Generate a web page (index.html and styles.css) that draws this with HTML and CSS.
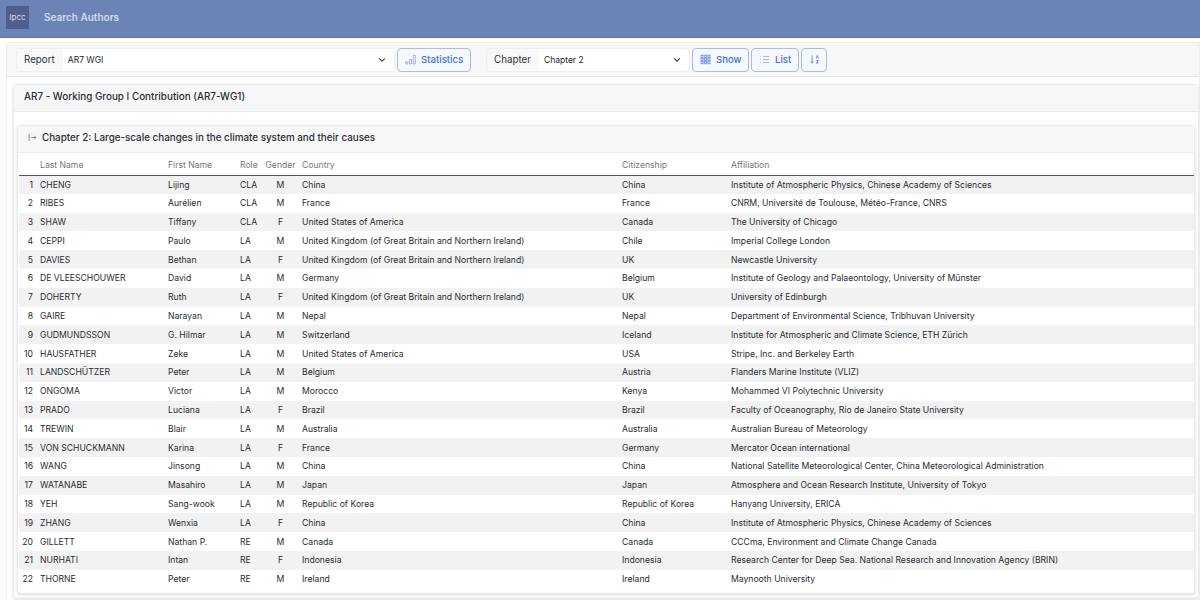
FILE: index.html
```html
<!DOCTYPE html>
<html lang="en">
<head>
<meta charset="utf-8">
<title>Search Authors</title>
<link rel="stylesheet" href="styles.css">
</head>
<body>
<nav class="navbar">
  <div class="logo">Ipcc</div>
  <div class="brand">Search Authors</div>
</nav>
<main class="outer">
  <div class="toolbar">
    <div class="group group-report">
      <span class="addon">Report</span>
      <div class="select"><span>AR7 WGI</span><svg class="chev" viewBox="0 0 16 16"><path d="M3.500 5.500 8 10l4.500-4.500"/></svg></div>
    </div>
    <button class="btn btn-stats"><svg class="ico" viewBox="0 0 16 16"><path d="M1 11.500h3v3H1zM6.500 8h3v6.500h-3zM12 2h3v12.500h-3z"/></svg>Statistics</button>
    <div class="group group-chapter">
      <span class="addon">Chapter</span>
      <div class="select"><span>Chapter 2</span><svg class="chev" viewBox="0 0 16 16"><path d="M3.500 5.500 8 10l4.500-4.500"/></svg></div>
    </div>
    <div class="btns">
      <button class="btn btn-show"><svg class="ico ico-grid" viewBox="0 0 16 16"><path d="M1.500 2h3v3h-3zM6.500 2h3v3h-3zM11.500 2h3v3h-3zM1.500 6.500h3v3h-3zM6.500 6.500h3v3h-3zM11.500 6.500h3v3h-3zM1.500 11h3v3h-3zM6.500 11h3v3h-3zM11.500 11h3v3h-3z"/></svg>Show</button>
      <button class="btn btn-list"><svg class="ico" viewBox="0 0 16 16"><path d="M5.500 3.500H15M5.500 8H15M5.500 12.500H15M1.500 3.500h1M1.500 8h1M1.500 12.500h1"/></svg>List</button>
      <button class="btn btn-sort"><svg class="ico ico-sort" viewBox="0 0 16 16"><path d="M4.500 2v11M2.500 11l2 2.500 2-2.500M10.500 6.500l1.500-4.500 1.500 4.500M10.700 9.500h2.800l-2.800 4h2.800"/></svg></button>
    </div>
  </div>
  <section class="card report">
    <header class="report-head">AR7 - Working Group I Contribution (AR7-WG1)</header>
    <div class="report-body">
      <section class="card chapter">
        <header class="chapter-head"><svg class="arrow" viewBox="0 0 16 16"><path d="M2 2v12M6 8h8M11 5l3 3-3 3"/></svg>Chapter 2: Large-scale changes in the climate system and their causes</header>
        <table>
          <colgroup><col class="c-n"><col class="c-last"><col class="c-first"><col class="c-role"><col class="c-gen"><col class="c-country"><col class="c-cit"><col></colgroup>
          <thead><tr><th></th><th>Last Name</th><th>First Name</th><th>Role</th><th>Gender</th><th>Country</th><th>Citizenship</th><th>Affiliation</th></tr></thead>
          <tbody>
<tr><td>1</td><td>CHENG</td><td>Lijing</td><td>CLA</td><td>M</td><td>China</td><td>China</td><td>Institute of Atmospheric Physics, Chinese Academy of Sciences</td></tr>
<tr><td>2</td><td>RIBES</td><td>Aurélien</td><td>CLA</td><td>M</td><td>France</td><td>France</td><td>CNRM, Université de Toulouse, Météo-France, CNRS</td></tr>
<tr><td>3</td><td>SHAW</td><td>Tiffany</td><td>CLA</td><td>F</td><td>United States of America</td><td>Canada</td><td>The University of Chicago</td></tr>
<tr><td>4</td><td>CEPPI</td><td>Paulo</td><td>LA</td><td>M</td><td>United Kingdom (of Great Britain and Northern Ireland)</td><td>Chile</td><td>Imperial College London</td></tr>
<tr><td>5</td><td>DAVIES</td><td>Bethan</td><td>LA</td><td>F</td><td>United Kingdom (of Great Britain and Northern Ireland)</td><td>UK</td><td>Newcastle University</td></tr>
<tr><td>6</td><td>DE VLEESCHOUWER</td><td>David</td><td>LA</td><td>M</td><td>Germany</td><td>Belgium</td><td>Institute of Geology and Palaeontology, University of Münster</td></tr>
<tr><td>7</td><td>DOHERTY</td><td>Ruth</td><td>LA</td><td>F</td><td>United Kingdom (of Great Britain and Northern Ireland)</td><td>UK</td><td>University of Edinburgh</td></tr>
<tr><td>8</td><td>GAIRE</td><td>Narayan</td><td>LA</td><td>M</td><td>Nepal</td><td>Nepal</td><td>Department of Environmental Science, Tribhuvan University</td></tr>
<tr><td>9</td><td>GUDMUNDSSON</td><td>G. Hilmar</td><td>LA</td><td>M</td><td>Switzerland</td><td>Iceland</td><td>Institute for Atmospheric and Climate Science, ETH Zürich</td></tr>
<tr><td>10</td><td>HAUSFATHER</td><td>Zeke</td><td>LA</td><td>M</td><td>United States of America</td><td>USA</td><td>Stripe, Inc. and Berkeley Earth</td></tr>
<tr><td>11</td><td>LANDSCHÜTZER</td><td>Peter</td><td>LA</td><td>M</td><td>Belgium</td><td>Austria</td><td>Flanders Marine Institute (VLIZ)</td></tr>
<tr><td>12</td><td>ONGOMA</td><td>Victor</td><td>LA</td><td>M</td><td>Morocco</td><td>Kenya</td><td>Mohammed VI Polytechnic University</td></tr>
<tr><td>13</td><td>PRADO</td><td>Luciana</td><td>LA</td><td>F</td><td>Brazil</td><td>Brazil</td><td>Faculty of Oceanography, Rio de Janeiro State University</td></tr>
<tr><td>14</td><td>TREWIN</td><td>Blair</td><td>LA</td><td>M</td><td>Australia</td><td>Australia</td><td>Australian Bureau of Meteorology</td></tr>
<tr><td>15</td><td>VON SCHUCKMANN</td><td>Karina</td><td>LA</td><td>F</td><td>France</td><td>Germany</td><td>Mercator Ocean international</td></tr>
<tr><td>16</td><td>WANG</td><td>Jinsong</td><td>LA</td><td>M</td><td>China</td><td>China</td><td>National Satellite Meteorological Center, China Meteorological Administration</td></tr>
<tr><td>17</td><td>WATANABE</td><td>Masahiro</td><td>LA</td><td>M</td><td>Japan</td><td>Japan</td><td>Atmosphere and Ocean Research Institute, University of Tokyo</td></tr>
<tr><td>18</td><td>YEH</td><td>Sang-wook</td><td>LA</td><td>M</td><td>Republic of Korea</td><td>Republic of Korea</td><td>Hanyang University, ERICA</td></tr>
<tr><td>19</td><td>ZHANG</td><td>Wenxia</td><td>LA</td><td>F</td><td>China</td><td>China</td><td>Institute of Atmospheric Physics, Chinese Academy of Sciences</td></tr>
<tr><td>20</td><td>GILLETT</td><td>Nathan P.</td><td>RE</td><td>M</td><td>Canada</td><td>Canada</td><td>CCCma, Environment and Climate Change Canada</td></tr>
<tr><td>21</td><td>NURHATI</td><td>Intan</td><td>RE</td><td>F</td><td>Indonesia</td><td>Indonesia</td><td>Research Center for Deep Sea. National Research and Innovation Agency (BRIN)</td></tr>
<tr><td>22</td><td>THORNE</td><td>Peter</td><td>RE</td><td>M</td><td>Ireland</td><td>Ireland</td><td>Maynooth University</td></tr>
          </tbody>
        </table>
      </section>
    </div>
    <div class="report-foot"></div>
  </section>
</main>
</body>
</html>
```
FILE: styles.css
```css
* { box-sizing: border-box; }
html, body { margin: 0; height: 600px; overflow: hidden; }
body { font-family: Inter, "Liberation Sans", sans-serif; background: #fff; color: #212529; font-size: 9px; }
.navbar { height: 38px; background: #6c83b6; border-bottom: 1px solid #5f74a8; display: flex; align-items: center; padding: 0 0 3px 6px; }
.logo { width: 23px; height: 23px; background: #4d5f8f; color: #d5dcec; font-size: 8px; display: flex; align-items: center; justify-content: center; }
.brand { margin-left: 15px; color: #d3dcee; font-size: 10px; font-weight: 600; }
.outer { margin: 4px 0 0 6px; border: 1px solid #eeeeee; border-bottom: 0; border-radius: 4px 0 0 0; height: 558px; overflow: hidden; }
.toolbar { height: 34px; background: #f7f7f7; border-bottom: 1px solid #e6e6e6; display: flex; align-items: center; padding: 0 0 0 9px; }
.group { display: flex; height: 24px; border: 1px solid #efefef; border-radius: 4px; overflow: hidden; }
.group-report { width: 379px; }
.group-chapter { width: 204px; margin-left: 15px; }
.addon { background: #f8f8f8; padding: 0 8px 0 7px; display: flex; align-items: center; font-size: 9.800px; color: #2f3236; }
.select { flex: 1; background: #fff; display: flex; align-items: center; justify-content: space-between; padding: 0 7px 0 5px; font-size: 8.500px; }
.chev { width: 10px; height: 10px; fill: none; stroke: #3a3d42; stroke-width: 1.700; }
.btn { height: 24px; background: #f7f8fb; border: 1px solid #a9bde0; border-radius: 4px; color: #3f75d8; font: 500 9.600px Inter, "Liberation Sans", sans-serif; display: flex; align-items: center; gap: 5px; padding: 0 7px; }
.btn-stats { margin-left: 2px; width: 74px; }
.btns { display: flex; gap: 2px; margin-left: 2px; }
.btn-show { width: 57px; }
.btn-list { width: 48px; }
.btn-sort { width: 26px; justify-content: center; }
.ico { width: 11px; height: 11px; fill: none; stroke: #7fa3e6; stroke-width: 1.100; flex: none; }
.ico-grid { stroke-width: 1.500; }
.ico-sort { stroke: #6b93e0; stroke-width: 1.400; }
.card { border: 1px solid #ebebeb; border-radius: 4px; }
.report { margin: 7px 0 0 6px; height: 515px; background: #fff; box-shadow: 0 1px 3px rgba(0,0,0,.12); overflow: hidden; }
.report-head { height: 27px; background: #f7f7f7; border-bottom: 1px solid #ebebeb; padding: 0 0 4px 10px; display: flex; align-items: center; font-size: 9.900px; font-weight: 500; color: #2b2e33; }
.report-body { padding: 13px 3px 0 3px; }
.report-foot { height: 3px; margin-top: 3px; background: #f3f3f3; }
.chapter { background: #fff; height: 469px; padding: 0 1px; box-shadow: 0 1px 3px rgba(0,0,0,.15); }
.chapter-head { height: 27px; margin: 0 -1px; background: #f7f7f7; border-bottom: 1px solid #ebebeb; padding: 0 0 4px 10px; display: flex; align-items: center; gap: 5px; font-size: 9.830px; font-weight: 500; color: #2b2e33; }
.arrow { width: 9px; height: 9px; fill: none; stroke: #555; stroke-width: 1.200; }
table { width: 1175px; margin-top: 2px; border-collapse: collapse; table-layout: fixed; font-size: 8.650px; color: #2a2c30; }
.c-n { width: 21px; } .c-last { width: 128px; } .c-first { width: 72px; } .c-role { width: 24px; } .c-gen { width: 38px; } .c-country { width: 320px; } .c-cit { width: 109px; }
th { height: 20px; font-weight: 400; text-align: left; color: #777; border-bottom: 1.500px solid #555; padding: 0; white-space: nowrap; }
th:nth-child(5), td:nth-child(5) { text-align: center; padding-right: 5px; }
td { height: 18.800px; padding: 0; white-space: nowrap; }
td:first-child { text-align: right; padding-right: 7px; }
tbody tr:nth-child(odd) { background: #f2f2f2; }
```
